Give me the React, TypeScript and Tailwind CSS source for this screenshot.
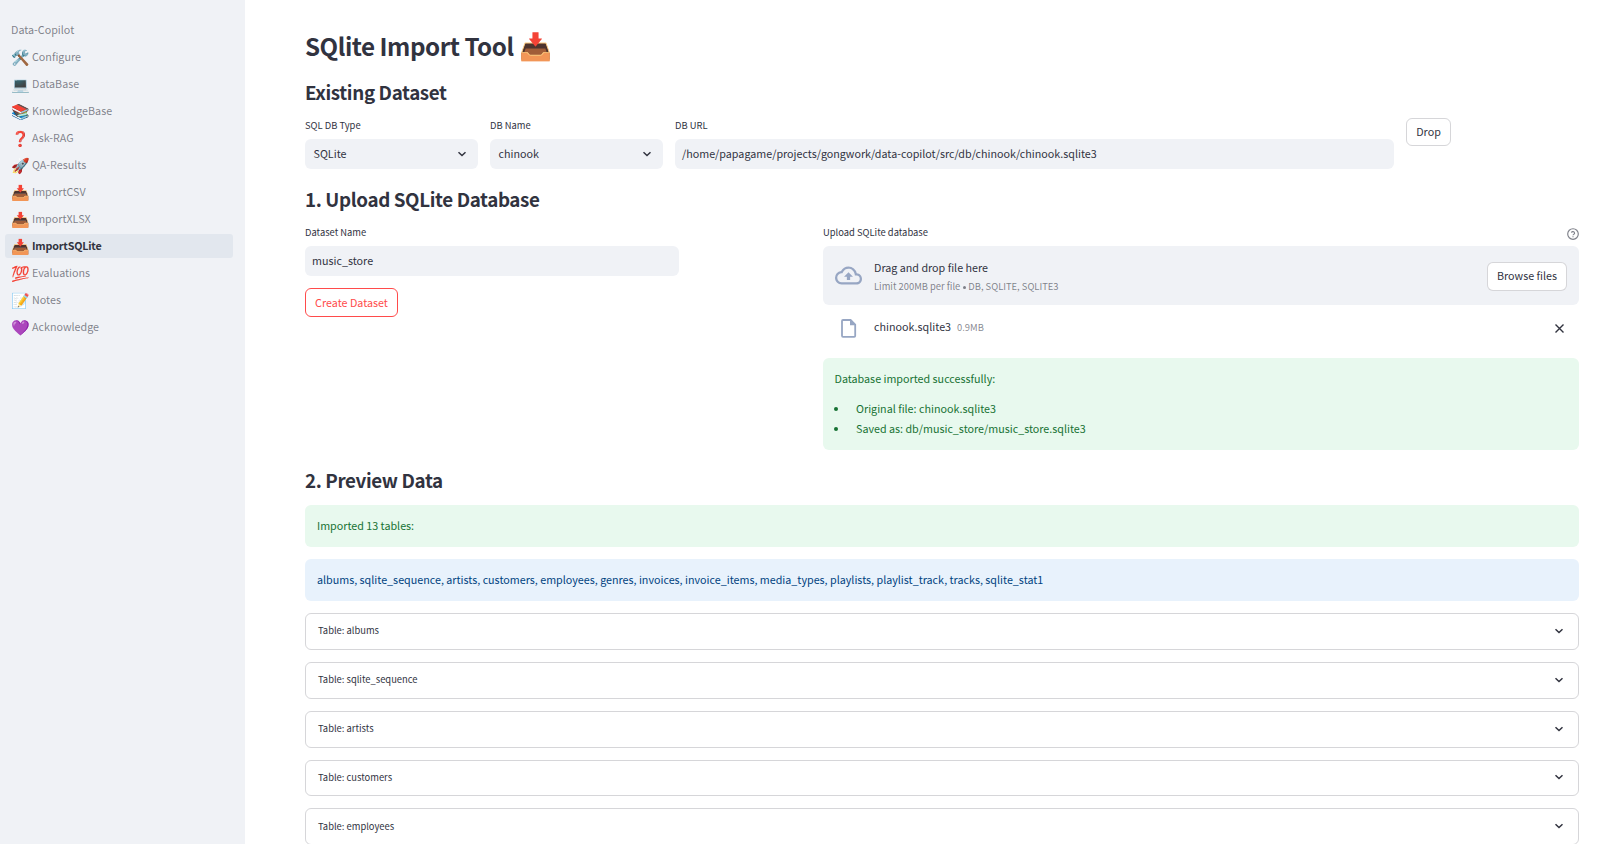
import React from "react";

const navItems = [
  { icon: "🛠️", label: "Configure" },
  { icon: "💻", label: "DataBase" },
  { icon: "📚", label: "KnowledgeBase" },
  { icon: "❓", label: "Ask-RAG" },
  { icon: "🚀", label: "QA-Results" },
  { icon: "📥", label: "ImportCSV" },
  { icon: "📥", label: "ImportXLSX" },
  { icon: "📥", label: "ImportSQLite", active: true },
  { icon: "💯", label: "Evaluations" },
  { icon: "📝", label: "Notes" },
  { icon: "💜", label: "Acknowledge" },
];

const tables = ["albums", "sqlite_sequence", "artists", "customers", "employees"];

function Sidebar() {
  return (
    <aside className="w-[245px] shrink-0 bg-[#f0f2f6] pt-[18px] pl-[5px] pr-3">
      <nav className="flex flex-col gap-[3px] text-[#31333f]/60">
        <div className="flex h-6 items-center pl-[6px]">Data-Copilot</div>
        {navItems.map((item) => (
          <div
            key={item.label}
            className={
              item.active
                ? "flex h-6 items-center rounded-[3px] bg-[#e2e7ee] pl-[6px] font-bold tracking-[-0.18px] text-[#31333f]"
                : "flex h-6 items-center pl-[6px]"
            }
          >
            <span className="w-[21px] pb-[2px] text-[15px] font-normal text-black">{item.icon}</span>
            <span>{item.label}</span>
          </div>
        ))}
      </nav>
    </aside>
  );
}

function Chevron() {
  return (
    <svg className="size-3 shrink-0" viewBox="0 0 12 12" fill="none" stroke="#31333f" strokeWidth="1.5">
      <path d="M2.5 4.2 6 7.5 9.5 4.2" />
    </svg>
  );
}

function Label({ children }: { children: React.ReactNode }) {
  return <div className="flex h-[17px] items-center pb-[2px] text-[9.4px]">{children}</div>;
}

function Select({ label, value }: { label: string; value: string }) {
  return (
    <div className="w-[173px]">
      <Label>{label}</Label>
      <div className="mt-[4px] flex h-[30px] items-center justify-between rounded-md bg-[#f0f2f6] pr-[10px] pl-[8.5px]">
        <span>{value}</span>
        <Chevron />
      </div>
    </div>
  );
}

function Heading({ children }: { children: React.ReactNode }) {
  return (
    <h2 className="flex h-[26px] items-center pb-[2px] text-[18.8px] font-semibold tracking-[-0.37px]">{children}</h2>
  );
}

function Uploader() {
  return (
    <div className="w-[756px]">
      <div className="flex items-center justify-between">
        <Label>Upload SQLite database</Label>
        <svg className="mt-px size-3" viewBox="0 0 24 24" fill="none" stroke="#7f818a" strokeWidth="2.3">
          <circle cx="12" cy="12" r="10.6" />
          <path d="M8.8 9.3a3.3 3.3 0 0 1 6.4 1c0 2.2-3.2 2.7-3.2 4.4M12 16.6v2" />
        </svg>
      </div>
      <div className="mt-[4px] flex h-[59px] items-center rounded-md bg-[#f0f2f6] px-3">
        <svg className="-mt-px size-[27px]" viewBox="0 0 24 24" fill="#97a6c3">
          <path d="M19.35 10.04A7.49 7.49 0 0 0 12 4C9.11 4 6.6 5.64 5.35 8.04A5.994 5.994 0 0 0 0 14c0 3.31 2.69 6 6 6h13c2.76 0 5-2.24 5-5 0-2.64-2.05-4.78-4.65-4.96zM19 18H6c-2.21 0-4-1.79-4-4 0-2.05 1.53-3.76 3.56-3.97l1.07-.11.5-.95A5.469 5.469 0 0 1 12 6c2.62 0 4.88 1.86 5.39 4.43l.3 1.5 1.53.11A2.98 2.98 0 0 1 22 15c0 1.65-1.35 3-3 3zM8 13h2.55v3h2.9v-3H16l-4-4z" />
        </svg>
        <div className="ml-[12px] flex-1 pt-[4px]">
          <div className="flex h-[19px] items-center">Drag and drop file here</div>
          <div className="flex h-[18px] items-center text-[9.4px] text-[#31333f]/60">
            <span>Limit 200MB per file</span>
            <span className="mx-[2.5px] size-[3px] rounded-full bg-[#31333f]/60" />
            <span>DB, SQLITE, SQLITE3</span>
          </div>
        </div>
        <button className="mt-px h-[29px] w-20 rounded-md border border-[#31333f]/20 bg-white">Browse files</button>
      </div>
      <div className="flex h-[47px] items-center pr-[13px] pl-[15px]">
        <svg className="-mt-[2px] size-[22px]" viewBox="0 0 22 22" fill="none" stroke="#97a6c3" strokeWidth="1.8">
          <path d="M5 3h7.6l4.6 4.6v11.2a1 1 0 0 1-1 1H5a1 1 0 0 1-1-1V4a1 1 0 0 1 1-1z" />
          <path d="M12 2.8v5.4h5.4z" fill="#97a6c3" stroke="none" />
        </svg>
        <span className="ml-[14px] pb-[2px]">chinook.sqlite3</span>
        <span className="ml-[6px] flex-1 pb-[2px] text-[9.4px] text-[#31333f]/60">0.9MB</span>
        <svg className="size-[13px]" viewBox="0 0 13 13" stroke="#31333f" strokeWidth="1.4">
          <path d="m2.5 2.5 8 8m0-8-8 8" />
        </svg>
      </div>
      <div className="mt-[6px] h-[92px] rounded-md bg-[#e8f9ee] px-3 pt-3 text-[#177233]">
        <p className="-ml-[0.5px] h-[18px] leading-[18px]">Database imported successfully:</p>
        <ul className="mt-[11px]">
          {["Original file: chinook.sqlite3", "Saved as: db/music_store/music_store.sqlite3"].map((line) => (
            <li key={line} className="flex h-5 items-center">
              <span className="-ml-px mr-[18px] size-1 rounded-full bg-[#177233]" />
              {line}
            </li>
          ))}
        </ul>
      </div>
    </div>
  );
}

export default function App() {
  return (
    <div className="flex h-[844px] w-[1606px] overflow-hidden bg-white font-['Noto_Sans_CJK_SC','Noto_Color_Emoji',sans-serif] text-[10.747px] leading-none text-[#31333f]">
      <Sidebar />
      <main className="flex w-[1334px] flex-col pt-[30px] pl-[60px]">
        <h1 className="flex h-[34px] shrink-0 items-center pb-[2px] text-[24.2px] font-semibold tracking-[-0.48px]">
          SQlite Import Tool<span className="ml-[5.5px] pb-[2px] text-[26.5px]">📥</span>
        </h1>
        <section className="pt-[16px]">
          <Heading>Existing Dataset</Heading>
          <div className="mt-3 flex gap-3">
            <Select label="SQL DB Type" value="SQLite" />
            <Select label="DB Name" value="chinook" />
            <div className="w-[719px]">
              <Label>DB URL</Label>
              <div className="mt-[4px] flex h-[30px] items-center rounded-md bg-[#f0f2f6] px-[7px]">
                /home/papagame/projects/gongwork/data-copilot/src/db/chinook/chinook.sqlite3
              </div>
            </div>
            <button className="h-7 w-[45px] rounded-md border border-[#31333f]/20">Drop</button>
          </div>
        </section>
        <section className="pt-[18px]">
          <Heading>1. Upload SQLite Database</Heading>
          <div className="mt-3 flex justify-between">
            <div className="w-[374px]">
              <Label>Dataset Name</Label>
              <div className="mt-[4px] flex h-[30px] items-center rounded-md bg-[#f0f2f6] px-[7px]">music_store</div>
              <button className="mt-3 h-[29px] w-[93px] rounded-md border border-[#ff4b4b] pt-px text-[#ff4b4b]">
                Create Dataset
              </button>
            </div>
            <Uploader />
          </div>
        </section>
        <section className="pt-[18px]">
          <Heading>2. Preview Data</Heading>
          <div className="mt-[11px] flex flex-col gap-3">
            <div className="flex h-[42px] items-center rounded-md bg-[#e8f9ee] px-3 text-[#177233]">
              Imported 13 tables:
            </div>
            <div className="flex h-[42px] items-center rounded-md bg-[#e8f2fc] px-3 text-[#004280]">
              albums, sqlite_sequence, artists, customers, employees, genres, invoices, invoice_items, media_types,
              playlists, playlist_track, tracks, sqlite_stat1
            </div>
            {tables.map((name) => (
              <div
                key={name}
                className="flex h-[36.85px] shrink-0 items-center justify-between rounded-md border border-[#31333f]/20 pr-[13.5px] pb-px pl-3 text-[9.4px]"
              >
                <span>Table: {name}</span>
                <Chevron />
              </div>
            ))}
          </div>
        </section>
      </main>
    </div>
  );
}
